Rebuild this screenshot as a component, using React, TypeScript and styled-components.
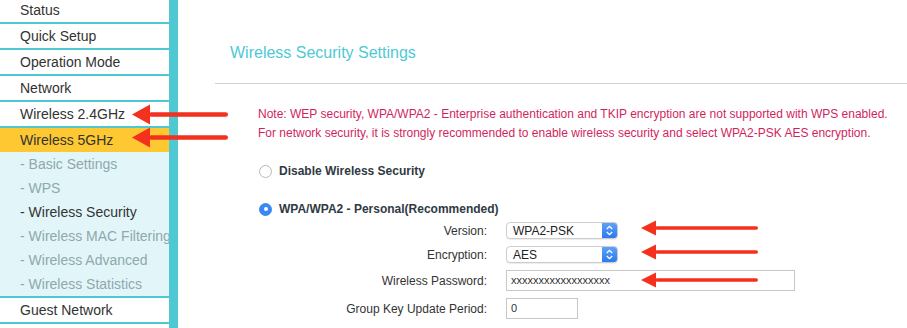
import styled, { createGlobalStyle } from 'styled-components';

const CYAN = '#4ec9d4';
const ARROW_RED = '#f4301e';

const GlobalStyle = createGlobalStyle`
  html, body {
    margin: 0;
    padding: 0;
    background: #fff;
  }
  body {
    font-family: 'Liberation Sans', Arial, Helvetica, sans-serif;
  }
`;

const Page = styled.div`
  position: relative;
  display: flex;
  width: 907px;
  height: 328px;
  overflow: hidden;
  background: #fff;
`;

const Sidebar = styled.nav`
  width: 169px;
  height: 100%;
  flex-shrink: 0;
  border-right: 9px solid ${CYAN};
  overflow: hidden;
`;

const MenuList = styled.div`
  display: flex;
  flex-direction: column;
  margin-top: -2px;
`;

const MenuItem = styled.div<{ $active?: boolean }>`
  height: 24px;
  line-height: 24px;
  padding-left: 20px;
  font-size: 14px;
  color: #333;
  white-space: nowrap;
  background: ${(p) => (p.$active ? '#fdc832' : '#fff')};
  border-bottom: ${(p) => (p.$active ? 'none' : `2px solid ${CYAN}`)};
`;

const SubMenu = styled.div`
  background: #e2f6f9;
  border-bottom: 2px solid ${CYAN};
`;

const SubItem = styled.div<{ $current?: boolean }>`
  height: 24px;
  line-height: 24px;
  padding-left: 20px;
  font-size: 14px;
  white-space: nowrap;
  overflow: hidden;
  color: ${(p) => (p.$current ? '#333' : '#8fa8ac')};
`;

const Main = styled.main`
  flex: 1;
  padding-top: 44px;
`;

const Title = styled.h1`
  margin: 0 0 0 52px;
  font-size: 16px;
  line-height: 18px;
  font-weight: normal;
  color: ${CYAN};
`;

const Divider = styled.div`
  margin: 21px 0 0 37px;
  border-top: 1px solid #d2d2d2;
`;

const Body = styled.div`
  padding-left: 80px;
`;

const Note = styled.div`
  margin-top: 21px;
  font-size: 12px;
  line-height: 19px;
  color: #d21f5e;
  white-space: nowrap;
`;

const RadioRow = styled.label<{ $gap: number }>`
  display: flex;
  align-items: center;
  gap: 7px;
  height: 16px;
  margin-top: ${(p) => p.$gap}px;
  font-size: 12px;
  font-weight: bold;
  color: #2f3a43;
`;

const RadioDot = styled.span<{ $checked?: boolean }>`
  box-sizing: border-box;
  width: 13px;
  height: 13px;
  margin-left: 1px;
  border-radius: 50%;
  display: flex;
  align-items: center;
  justify-content: center;
  background: ${(p) => (p.$checked ? '#3b87f6' : '#fff')};
  border: 1px solid ${(p) => (p.$checked ? '#3b87f6' : '#b8b8b8')};

  &::after {
    content: '';
    display: ${(p) => (p.$checked ? 'block' : 'none')};
    width: 4px;
    height: 4px;
    border-radius: 50%;
    background: #fff;
  }
`;

const Form = styled.div`
  display: grid;
  grid-template-columns: 229px auto;
  column-gap: 19px;
  row-gap: 7px;
  align-items: center;
  margin-top: 5px;
`;

const Label = styled.div`
  text-align: right;
  font-size: 12px;
  color: #333;
  white-space: nowrap;
`;

const SelectBox = styled.div`
  box-sizing: border-box;
  display: flex;
  align-items: center;
  width: 112px;
  height: 17px;
  border: 1px solid #cdcdcd;
  border-radius: 4px;
  background: #fff;
  box-shadow: 0 1px 1px rgba(0, 0, 0, 0.08);
  overflow: hidden;
`;

const SelectText = styled.span`
  flex: 1;
  padding-left: 6px;
  font-size: 12px;
  color: #222;
`;

const Stepper = styled.span`
  width: 15px;
  height: 100%;
  display: flex;
  align-items: center;
  justify-content: center;
  background: linear-gradient(#5ea3f9, #2b79ee);
`;

const TextInput = styled.div<{ $width: number }>`
  box-sizing: border-box;
  width: ${(p) => p.$width}px;
  height: 21px;
  line-height: 19px;
  padding-left: 4px;
  border: 1px solid #c8c8c8;
  font-size: 11px;
  color: #333;
  background: #fff;
`;

const Overlay = styled.svg`
  position: absolute;
  left: 0;
  top: 0;
  pointer-events: none;
`;

function Select({ value }: { value: string }) {
  return (
    <SelectBox>
      <SelectText>{value}</SelectText>
      <Stepper>
        <svg width="9" height="13" viewBox="0 0 9 13">
          <polyline points="1.8,5 4.5,2.3 7.2,5" fill="none" stroke="#fff" strokeWidth="1.3" />
          <polyline points="1.8,8 4.5,10.7 7.2,8" fill="none" stroke="#fff" strokeWidth="1.3" />
        </svg>
      </Stepper>
    </SelectBox>
  );
}

type ArrowProps = { tip: number; tail: number; y: number; head: number; half: number; thick: number };

function Arrow({ tip, tail, y, head, half, thick }: ArrowProps) {
  return (
    <g fill={ARROW_RED}>
      <rect x={tip + head - 1} y={y - thick / 2} width={tail - tip - head + 1} height={thick} rx={thick / 2} />
      <polygon points={`${tip},${y} ${tip + head},${y - half} ${tip + head},${y + half}`} />
    </g>
  );
}

const subItems = [
  '- Basic Settings',
  '- WPS',
  '- Wireless Security',
  '- Wireless MAC Filtering',
  '- Wireless Advanced',
  '- Wireless Statistics',
];

export default function App() {
  return (
    <>
      <GlobalStyle />
      <Page>
        <Sidebar>
          <MenuList>
            <MenuItem>Status</MenuItem>
            <MenuItem>Quick Setup</MenuItem>
            <MenuItem>Operation Mode</MenuItem>
            <MenuItem>Network</MenuItem>
            <MenuItem>Wireless 2.4GHz</MenuItem>
            <MenuItem $active>Wireless 5GHz</MenuItem>
            <SubMenu>
              {subItems.map((item) => (
                <SubItem key={item} $current={item === '- Wireless Security'}>
                  {item}
                </SubItem>
              ))}
            </SubMenu>
            <MenuItem>Guest Network</MenuItem>
          </MenuList>
        </Sidebar>
        <Main>
          <Title>Wireless Security Settings</Title>
          <Divider />
          <Body>
            <Note>
              <div>
                Note: WEP security, WPA/WPA2 - Enterprise authentication and TKIP encryption are not supported with WPS
                enabled.
              </div>
              <div>
                For network security, it is strongly recommended to enable wireless security and select WPA2-PSK AES
                encryption.
              </div>
            </Note>
            <RadioRow $gap={20}>
              <RadioDot />
              Disable Wireless Security
            </RadioRow>
            <RadioRow $gap={22}>
              <RadioDot $checked />
              WPA/WPA2 - Personal(Recommended)
            </RadioRow>
            <Form>
              <Label>Version:</Label>
              <Select value="WPA2-PSK" />
              <Label>Encryption:</Label>
              <Select value="AES" />
              <Label>Wireless Password:</Label>
              <TextInput $width={289}>xxxxxxxxxxxxxxxxxx</TextInput>
              <Label>Group Key Update Period:</Label>
              <TextInput $width={72}>0</TextInput>
            </Form>
          </Body>
        </Main>
        <Overlay width="907" height="328" viewBox="0 0 907 328">
          <Arrow tip={132} tail={228} y={114.5} head={18} half={10} thick={4.5} />
          <Arrow tip={132} tail={228} y={137.5} head={18} half={10} thick={4.5} />
          <Arrow tip={641} tail={758} y={228} head={15} half={7.5} thick={3.5} />
          <Arrow tip={641} tail={758} y={252} head={15} half={7.5} thick={3.5} />
          <Arrow tip={641} tail={758} y={280} head={15} half={7.5} thick={3.5} />
        </Overlay>
      </Page>
    </>
  );
}
